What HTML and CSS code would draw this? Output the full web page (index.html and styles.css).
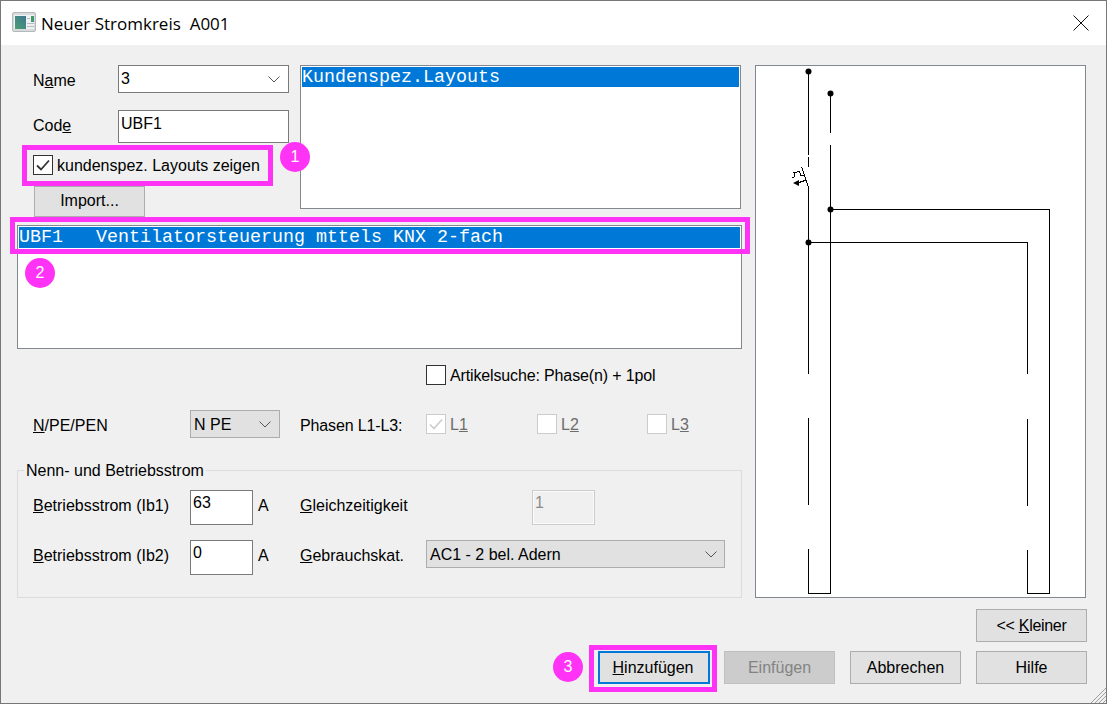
FILE: index.html
```html
<!DOCTYPE html>
<html lang="de">
<head>
<meta charset="utf-8">
<title>Neuer Stromkreis A001</title>
<link rel="stylesheet" href="styles.css">
</head>
<body>
<div class="window">
  <header class="titlebar">
    <svg class="app-icon" width="24" height="20" viewBox="0 0 24 20">
      <defs>
        <linearGradient id="panel" x1="0" y1="1" x2="1" y2="0">
          <stop offset="0" stop-color="#4a9f72"/>
          <stop offset="1" stop-color="#3f7592"/>
        </linearGradient>
      </defs>
      <rect x="0.5" y="0.5" width="23" height="19" rx="1.5" fill="#d8dbde" stroke="#b4b8bc"/>
      <rect x="2" y="3" width="20" height="14" fill="#eef0f2"/>
      <rect x="3" y="4" width="11" height="13" fill="url(#panel)"/>
      <rect x="19" y="4" width="3" height="6" fill="#3f9a70"/>
      <rect x="15" y="6" width="3" height="1" fill="#b5bbc0"/>
      <rect x="15" y="11" width="7" height="1" fill="#b5bbc0"/>
      <rect x="15" y="14" width="7" height="1" fill="#b5bbc0"/>
    </svg>
    <span class="title">Neuer Stromkreis&nbsp; A001</span>
    <svg class="close" width="16" height="16" viewBox="0 0 16 16"><path d="M0.5 0.5 15.5 15.5M15.5 0.5 0.5 15.5" stroke="#111" fill="none"/></svg>
  </header>

  <div class="content">
    <div class="main">
      <div class="left">
        <div class="top">
          <div class="form">
            <div class="row name-row">
              <span class="label"><span>N<u>a</u>me</span></span>
              <div class="field select wide"><span>3</span>
                <svg class="chev" width="12" height="7" viewBox="0 0 12 7"><path d="M0.5 0.5 6 6 11.5 0.5" fill="none" stroke="#555"/></svg>
              </div>
            </div>
            <div class="row code-row">
              <span class="label"><span>Cod<u>e</u></span></span>
              <div class="field wide"><span>UBF1</span></div>
            </div>
            <label class="check-row custom-check">
              <span class="box"><svg width="18" height="18" viewBox="0 0 18 18"><path d="M3 9.5 7 13.5 15 4.5" fill="none" stroke="#333" stroke-width="1.8"/></svg></span>
              <span class="check-text">kundenspez. Layouts zeigen</span>
            </label>
            <button class="btn import"><span>Import...</span></button>
          </div>
          <div class="list layouts"><div class="sel">Kundenspez.Layouts</div></div>
        </div>

        <div class="list circuits"><div class="sel">UBF1   Ventilatorsteuerung mttels KNX 2-fach</div></div>

        <label class="check-row search">
          <span class="box"></span>
          <span class="check-text tight">Artikelsuche: Phase(n) + 1pol</span>
        </label>

        <div class="phase-row">
          <span class="phase-label"><span><u>N</u>/PE/PEN</span></span>
          <div class="field select combo npe"><span>N PE</span>
            <svg class="chev" width="12" height="7" viewBox="0 0 12 7"><path d="M0.5 0.5 6 6 11.5 0.5" fill="none" stroke="#555"/></svg>
          </div>
          <span class="phase-caption tight">Phasen L1-L3:</span>
          <label class="check-row disabled l1">
            <span class="box"><svg width="18" height="18" viewBox="0 0 18 18"><path d="M3 9.5 7 13.5 15 4.5" fill="none" stroke="#ccc" stroke-width="1.6"/></svg></span>
            <span class="check-text">L<u>1</u></span>
          </label>
          <label class="check-row disabled l2"><span class="box"></span><span class="check-text">L<u>2</u></span></label>
          <label class="check-row disabled l3"><span class="box"></span><span class="check-text">L<u>3</u></span></label>
        </div>

        <fieldset class="group">
          <legend>Nenn- und Betriebsstrom</legend>
          <div class="group-grid">
            <span class="glabel"><span><u>B</u>etriebsstrom (Ib1)</span></span>
            <div class="field num"><span>63</span></div>
            <span class="glabel unit">A</span>
            <span class="glabel"><span><u>G</u>leichzeitigkeit</span></span>
            <div class="field num off"><span>1</span></div>

            <span class="glabel"><span><u>B</u>etriebsstrom (Ib2)</span></span>
            <div class="field num"><span>0</span></div>
            <span class="glabel unit">A</span>
            <span class="glabel"><span><u>G</u>ebrauchskat.</span></span>
            <div class="field select combo cat"><span>AC1 - 2 bel. Adern</span>
              <svg class="chev" width="12" height="7" viewBox="0 0 12 7"><path d="M0.5 0.5 6 6 11.5 0.5" fill="none" stroke="#555"/></svg>
            </div>
          </div>
        </fieldset>
      </div>

      <div class="preview">
        <svg class="diagram" width="329" height="531" viewBox="756 66 329 531">
          <g fill="none" stroke="#000" shape-rendering="crispEdges">
            <path d="M808.5 71V155M808.5 157V167M808.5 187V374M808.5 418V505M808.5 549V593.5H830.5M830.5 93V133M830.5 145V593.5"/>
            <path d="M830.5 209.5H1049.5V593.5H1027.5V550M1027.5 505.5V419M1027.5 374V242.5H808.5"/>
            <path d="M801.7 167 808.3 187"/>
            <path d="M792.3 177.3 795 176.7 794 172.7 799.3 171.3 801 175.7 803.5 175"/>
            <path d="M806.7 180 798.3 182.7"/>
          </g>
          <path d="M793 183 799 180 799 186Z" fill="#000"/>
          <g fill="#000">
            <circle cx="808.5" cy="71.5" r="3"/>
            <circle cx="830.5" cy="93.5" r="3"/>
            <circle cx="830.5" cy="209.5" r="3"/>
            <circle cx="808.5" cy="242.5" r="3"/>
          </g>
        </svg>
      </div>
    </div>

    <div class="footer">
      <button class="btn"><span class="tighter">&lt;&lt; <u>K</u>leiner</span></button>
      <div class="actions">
        <button class="btn primary"><span><u>H</u>inzufügen</span></button>
        <button class="btn inactive">Einfügen</button>
        <button class="btn">Abbrechen</button>
        <button class="btn">Hilfe</button>
      </div>
    </div>
  </div>

  <div class="mark mark-check"></div>
  <div class="mark mark-list"></div>
  <div class="mark mark-add"></div>
  <div class="badge badge-1">1</div>
  <div class="badge badge-2">2</div>
  <div class="badge badge-3">3</div>

  <svg class="grip" width="16" height="16" viewBox="0 0 16 16">
    <path d="M16 1 1 16M16 5 5 16M16 9 9 16M16 13 13 16" stroke="#a0a0a0" fill="none"/>
  </svg>
</div>
</body>
</html>
```
FILE: styles.css
```css
* { box-sizing: border-box; }
html, body { margin: 0; padding: 0; }
body {
  width: 1107px;
  height: 704px;
  overflow: hidden;
  font-family: "Liberation Sans", Arial, sans-serif;
  font-size: 16px;
  color: #000;
  background: #f0f0f0;
}
.window {
  position: relative;
  width: 1107px;
  height: 704px;
  border: 1px solid #777;
  display: flex;
  flex-direction: column;
  background: #f0f0f0;
  overflow: hidden;
}
.titlebar {
  height: 44px;
  background: #fff;
  display: flex;
  align-items: center;
  padding: 0 17px 0 11px;
  flex: none;
}
.app-icon { flex: none; margin-right: 5px; margin-top: -2px; }
.title {
  font-family: "Open Sans", "Noto Sans", sans-serif;
  font-size: 17px;
  flex: 1;
  white-space: pre;
}
.close { flex: none; margin-top: -1px; }

.content {
  flex: 1;
  display: flex;
  flex-direction: column;
  padding: 20px 19px 0 16px;
}
.main { display: flex; gap: 13px; height: 533px; flex: none; }
.left { width: 725px; flex: none; display: flex; flex-direction: column; }

.top { display: flex; }
.form { width: 283px; flex: none; padding-left: 16px; display: flex; flex-direction: column; align-items: flex-start; }
.row { display: flex; }
.name-row { height: 28px; }
.code-row { height: 33px; margin-top: 17px; }
.label { width: 85px; flex: none; display: flex; align-items: center; }
.name-row .label { padding-top: 4px; }
.code-row .label { padding-bottom: 2px; }

.field {
  background: #fff;
  border: 1px solid #7a7a7a;
  padding: 0 2px;
  display: flex;
  justify-content: space-between;
  line-height: 24px;
}
.wide { width: 171px; line-height: 26px; }
.select { height: 28px; padding-right: 8px; }
.chev { flex: none; margin-top: 10px; }
.combo { background: #e1e1e1; border-color: #adadad; padding-left: 3px; line-height: 28px; }
.npe { width: 90px; height: 28px; }
.cat { width: 299px; height: 28px; padding-right: 7px; }
.num { width: 63px; height: 35px; line-height: 24px; }
.off { border-color: #ccc; box-shadow: inset 0 0 0 1px #fbfbfb; background: #f0f0f0; color: #8a8a8a; margin-left: 106px; }

.check-row { display: flex; align-items: center; gap: 4px; height: 20px; white-space: nowrap; }
.check-text { padding-top: 2px; }
.box { width: 20px; height: 20px; flex: none; border: 1px solid #333; background: #fff; display: flex; align-items: center; justify-content: center; }
.custom-check { margin-top: 12px; }
.disabled { color: #6d6d6d; }
.disabled .box { border-color: #ccc; }
.tight { letter-spacing: -0.14px; }
.tighter { letter-spacing: -0.3px; }

.btn {
  font: inherit;
  color: #000;
  width: 111px;
  height: 33px;
  padding: 0;
  background: #e1e1e1;
  border: 1px solid #adadad;
  border-radius: 0;
}
.import { margin: 11px 0 0 1px; height: 31px; padding-bottom: 2px; }
.primary { width: 112px; border: 2px solid #0078d7; padding-right: 2px; }
.inactive { background: #ccc; border-color: #bfbfbf; color: #838383; }

.list {
  background: #fff;
  border: 1px solid #828790;
  padding: 1px;
  font-family: "Liberation Mono", "Courier New", monospace;
  font-size: 18.33px;
}
.sel { background: #0078d7; color: #fff; height: 20px; line-height: 22px; white-space: pre; }
.layouts { width: 441px; height: 144px; }
.circuits { width: 725px; height: 124px; margin-top: 8px; flex: none; }
.circuits .sel { height: 21px; line-height: 21px; }

.search { margin: 16px 0 0 409px; }

.phase-row { display: flex; align-items: center; height: 28px; margin-top: 25px; }
.phase-label { width: 173px; flex: none; padding-left: 16px; padding-top: 4px; }
.phase-caption { width: 126px; flex: none; margin-left: 20px; padding-top: 4px; }
.l1 { width: 111px; }
.l2 { width: 110px; }

.group {
  margin: 22px 0 0;
  padding: 10px 0 0 15px;
  height: 139px;
  border: 1px solid #dcdcdc;
  min-width: 0;
}
.group legend { margin-left: -9px; padding: 0 2px; height: 20px; line-height: 22px; }
.group-grid {
  display: grid;
  grid-template-columns: 157px 63px 47px 126px 299px;
  grid-template-rows: 35px 35px;
  row-gap: 15px;
}
.glabel { display: flex; align-items: center; padding-bottom: 4px; }
.group-grid > .cat { align-self: start; }
.unit { padding-left: 5px; }

.preview { width: 331px; flex: none; background: #fff; border: 1px solid #828790; }
.diagram { display: block; }

.footer { display: flex; flex-direction: column; align-items: flex-end; margin-top: 11px; }
.actions { display: flex; gap: 15px; margin-top: 9px; }
.actions .primary { margin-right: -1px; }

.mark { position: absolute; border: 5px solid #ff33f5; pointer-events: none; }
.mark-check { left: 21px; top: 144px; width: 251px; height: 41px; }
.mark-list { left: 9px; top: 216px; width: 740px; height: 37px; }
.mark-add { left: 588px; top: 644px; width: 128px; height: 47px; }

.badge {
  position: absolute;
  width: 30px;
  height: 30px;
  border-radius: 50%;
  background: #ff33f5;
  color: #fff;
  display: flex;
  align-items: center;
  justify-content: center;
  font-size: 16px;
}
.badge-1 { left: 279px; top: 141px; }
.badge-2 { left: 24px; top: 257px; }
.badge-3 { left: 552px; top: 651px; }

.grip { position: absolute; right: 0; bottom: 0; }
```
